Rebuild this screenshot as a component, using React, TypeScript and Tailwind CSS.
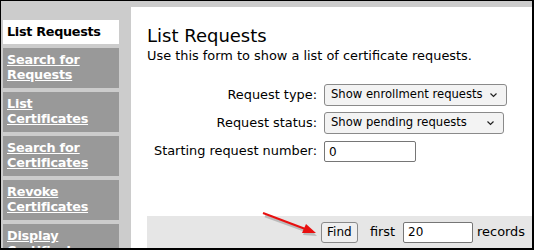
import React from "react";

const menu = [
  ["Search for", "Requests"],
  ["List", "Certificates"],
  ["Search for", "Certificates"],
  ["Revoke", "Certificates"],
  ["Display", "Certificate"],
];

function Chevron() {
  return (
    <svg width="9" height="6" viewBox="0 0 9 6" className="shrink-0">
      <path d="M1.5 1.5 L4.5 4.5 L7.5 1.5" fill="none" stroke="#222" strokeWidth="1.2" />
    </svg>
  );
}

function FakeSelect({ label, width }: { label: string; width: string }) {
  return (
    <div
      className={`${width} h-[22px] flex items-center justify-between pl-[6px] pr-[8px] bg-[#f3f3f3] border border-[#8a8a8a] rounded-[3px] text-[11.6px] text-black`}
    >
      <span>{label}</span>
      <Chevron />
    </div>
  );
}

export default function App() {
  return (
    <div
      className="relative w-[534px] h-[250px] overflow-hidden bg-[#cccccc] border-l border-t border-r-2 border-b-2 border-black flex flex-col"
      style={{ fontFamily: '"DejaVu Sans", Verdana, sans-serif' }}
    >
      <div className="h-[6px] shrink-0" />
      <div className="flex flex-1 min-h-0">
        {/* sidebar */}
        <div className="w-[130px] shrink-0 pt-[13px] pl-[2px] flex flex-col gap-[4px]">
          <div className="w-[116px] h-[24px] shrink-0 bg-white flex items-center pl-[4px] text-[12.8px] font-bold text-black tracking-[-0.3px]">
            List Requests
          </div>
          {menu.map(([a, b]) => (
            <div
              key={a + b}
              className="w-[116px] h-[40px] shrink-0 bg-[#999999] pl-[4px] pt-[4px] text-[12.8px] leading-[15px] font-bold text-white underline tracking-[-0.2px]"
            >
              <div>{a}</div>
              <div>{b}</div>
            </div>
          ))}
        </div>

        {/* content */}
        <div className="flex-1 bg-white pl-[16px] pt-[17px] flex flex-col min-w-0">
          <h1 className="text-[18px] leading-[24px] text-black">List Requests</h1>
          <p className="text-[12.9px] leading-[16px] text-black">
            Use this form to show a list of certificate requests.
          </p>

          <div className="mt-[20px] grid grid-cols-[170px_auto] gap-x-[7px] gap-y-[6px] items-center text-[12.9px] text-black">
            <div className="text-right">Request type:</div>
            <FakeSelect label="Show enrollment requests" width="w-[183px]" />
            <div className="text-right">Request status:</div>
            <FakeSelect label="Show pending requests" width="w-[180px]" />
            <div className="text-right">Starting request number:</div>
            <div className="w-[92px] h-[21px] border border-[#767676] rounded-[2px] bg-white flex items-center pl-[4px] mt-[1px] text-[12px]">
              0
            </div>
          </div>

          <div className="mt-auto h-[32px] bg-[#e6e6e6] flex items-center justify-end pr-[7px] text-[12.9px] text-black">
            <div className="w-[37px] h-[21px] bg-[#efefef] border border-[#8a8a8a] rounded-[3px] flex items-center justify-center text-[12px]">
              Find
            </div>
            <span className="ml-[12px]">first</span>
            <div className="ml-[8px] w-[70px] h-[21px] border border-[#767676] rounded-[2px] bg-white flex items-center pl-[4px] text-[12px]">
              20
            </div>
            <span className="ml-[4px]">records</span>
          </div>
        </div>
      </div>

      {/* red annotation arrow */}
      <svg className="absolute left-[255px] top-[205px]" width="70" height="35" viewBox="0 0 70 35">
        <line x1="8" y1="8" x2="52" y2="24" stroke="#888" strokeOpacity="0.45" strokeWidth="2.5" transform="translate(1,2)" />
        <polygon points="60,28 46,27 50,18" fill="#888" fillOpacity="0.45" transform="translate(1,2)" />
        <line x1="7" y1="7" x2="52" y2="24" stroke="#e81010" strokeWidth="2" />
        <polygon points="60,27 46,27 50,18" fill="#e81010" />
      </svg>
    </div>
  );
}
